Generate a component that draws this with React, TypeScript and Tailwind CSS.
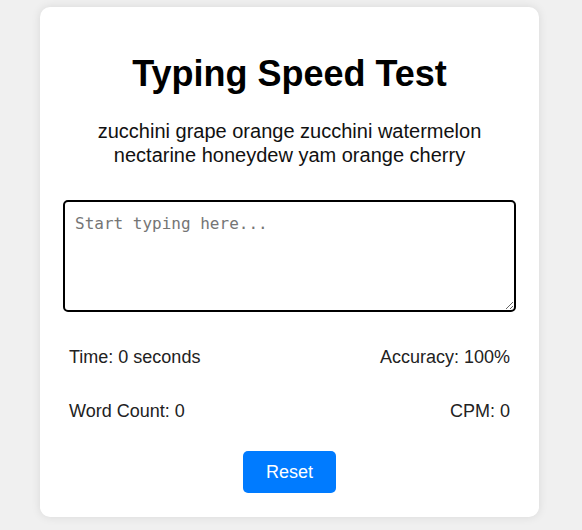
import React from "react";

export default function App() {
  return (
    <div className="min-h-[530px] w-full bg-[#f0f0f0] pt-[7px]" style={{ fontFamily: '"Liberation Sans", Arial, sans-serif' }}>
      <div className="ml-[40px] flex w-[499px] flex-col items-center rounded-[10px] bg-white px-[23px] pb-[24px] pt-[47px] shadow-[0_0_10px_rgba(0,0,0,0.1)]">
        <h1 className="m-0 text-[36px] font-bold leading-[40px] text-black">Typing Speed Test</h1>
        <p className="mt-[25px] text-center text-[20px] leading-[24px] text-[#111]">
          zucchini grape orange zucchini watermelon
          <br />
          nectarine honeydew yam orange cherry
        </p>
        <textarea
          className="mt-[33px] h-[112px] w-[453px] resize-y rounded-[5px] border-2 border-black p-[10px] text-[16px] outline-none placeholder:text-[#757575]"
          style={{ fontFamily: '"DejaVu Sans Mono", monospace' }}
          placeholder="Start typing here..."
        />
        <div className="mt-[32px] flex w-full justify-between px-[6px] text-[18px] leading-[27px] text-[#222]">
          <span>Time: 0 seconds</span>
          <span>Accuracy: 100%</span>
        </div>
        <div className="mt-[27px] flex w-full justify-between px-[6px] text-[18px] leading-[27px] text-[#222]">
          <span>Word Count: 0</span>
          <span>CPM: 0</span>
        </div>
        <button className="mt-[26px] h-[42px] w-[93px] rounded-[5px] bg-[#007bff] text-[18px] text-white">Reset</button>
      </div>
    </div>
  );
}
